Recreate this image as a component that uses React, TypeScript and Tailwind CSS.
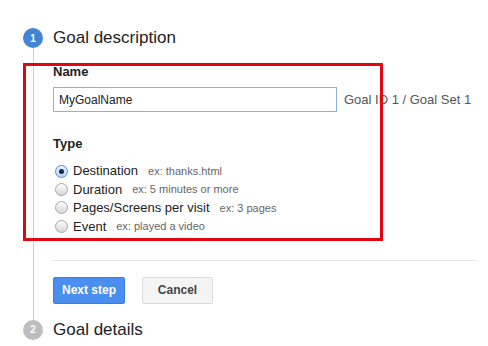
import React from "react";

const font = { fontFamily: '"Liberation Sans", Arial, sans-serif' };

function Radio({ checked }: { checked?: boolean }) {
  return (
    <span
      className={
        "relative flex h-[13px] w-[13px] shrink-0 items-center justify-center rounded-full border " +
        (checked
          ? "border-[#5b8ed6] bg-gradient-to-b from-[#e8f1fc] to-[#b9d3f3]"
          : "border-[#a5a5a5] bg-gradient-to-b from-[#fdfdfd] to-[#d6d6d6]")
      }
    >
      {checked && <span className="h-[5px] w-[5px] rounded-full bg-[#1b2a44]" />}
    </span>
  );
}

const options = [
  { label: "Destination", ex: "ex: thanks.html", checked: true },
  { label: "Duration", ex: "ex: 5 minutes or more" },
  { label: "Pages/Screens per visit", ex: "ex: 3 pages" },
  { label: "Event", ex: "ex: played a video" },
];

export default function App() {
  return (
    <div className="relative h-[346px] w-[488px] overflow-hidden bg-white" style={font}>
      <div className="pl-[23px] pt-[28px]">
        {/* Step 1 header */}
        <div className="flex h-[20px] items-center">
          <div className="flex h-[20px] w-[20px] items-center justify-center rounded-full bg-[#4285d4] text-[10px] font-bold text-white">
            1
          </div>
          <div className="ml-[10px] text-[17px] leading-[20px] text-[#222]">Goal description</div>
        </div>

        {/* Body with vertical line */}
        <div className="flex">
          <div className="flex w-[20px] justify-center">
            <div className="w-px bg-[#cfcfcf]" />
          </div>
          <div className="ml-[10px] pb-[16px] pt-[16px]">
            <div className="text-[13px] font-bold leading-[16px] text-[#222]">Name</div>
            <div className="mt-[7px] flex items-center">
              <div className="flex h-[25px] w-[284px] items-center border border-[#8fb2dc] pl-[5px] text-[12px] text-[#222]">
                MyGoalName
              </div>
              <div className="ml-[7px] whitespace-nowrap text-[13px] text-[#555]">Goal ID 1 / Goal Set 1</div>
            </div>

            <div className="mt-[24px] text-[13px] font-bold leading-[16px] text-[#222]">Type</div>
            <div className="mt-[10px] flex flex-col">
              {options.map((o) => (
                <div key={o.label} className="flex h-[18.4px] items-center pl-[2px]">
                  <Radio checked={o.checked} />
                  <span className="ml-[5px] text-[13px] text-[#222]">{o.label}</span>
                  <span className="ml-[10px] text-[11px] text-[#666]">{o.ex}</span>
                </div>
              ))}
            </div>

            <div className="mt-[24px] h-px w-[424px] bg-[#e5e5e5]" />

            <div className="mt-[16px] flex gap-[17px]">
              <button className="flex h-[27px] w-[72px] items-center justify-center rounded-[2px] border border-[#3b7ce6] bg-[#4a8ef0] text-[12px] font-bold text-white">
                Next step
              </button>
              <button className="flex h-[27px] w-[71px] items-center justify-center rounded-[2px] border border-[#dcdcdc] bg-[#f4f4f4] text-[12px] font-bold text-[#444]">
                Cancel
              </button>
            </div>
          </div>
        </div>

        {/* Step 2 header */}
        <div className="flex h-[20px] items-center">
          <div className="flex h-[20px] w-[20px] items-center justify-center rounded-full bg-[#bdbdbd] text-[10px] font-bold text-white">
            2
          </div>
          <div className="ml-[10px] text-[17px] leading-[20px] text-[#222]">Goal details</div>
        </div>
      </div>

      {/* Red annotation box */}
      <div className="pointer-events-none absolute left-[23px] top-[63px] h-[178px] w-[360px] border-[3px] border-[#e1060f]" />
    </div>
  );
}
